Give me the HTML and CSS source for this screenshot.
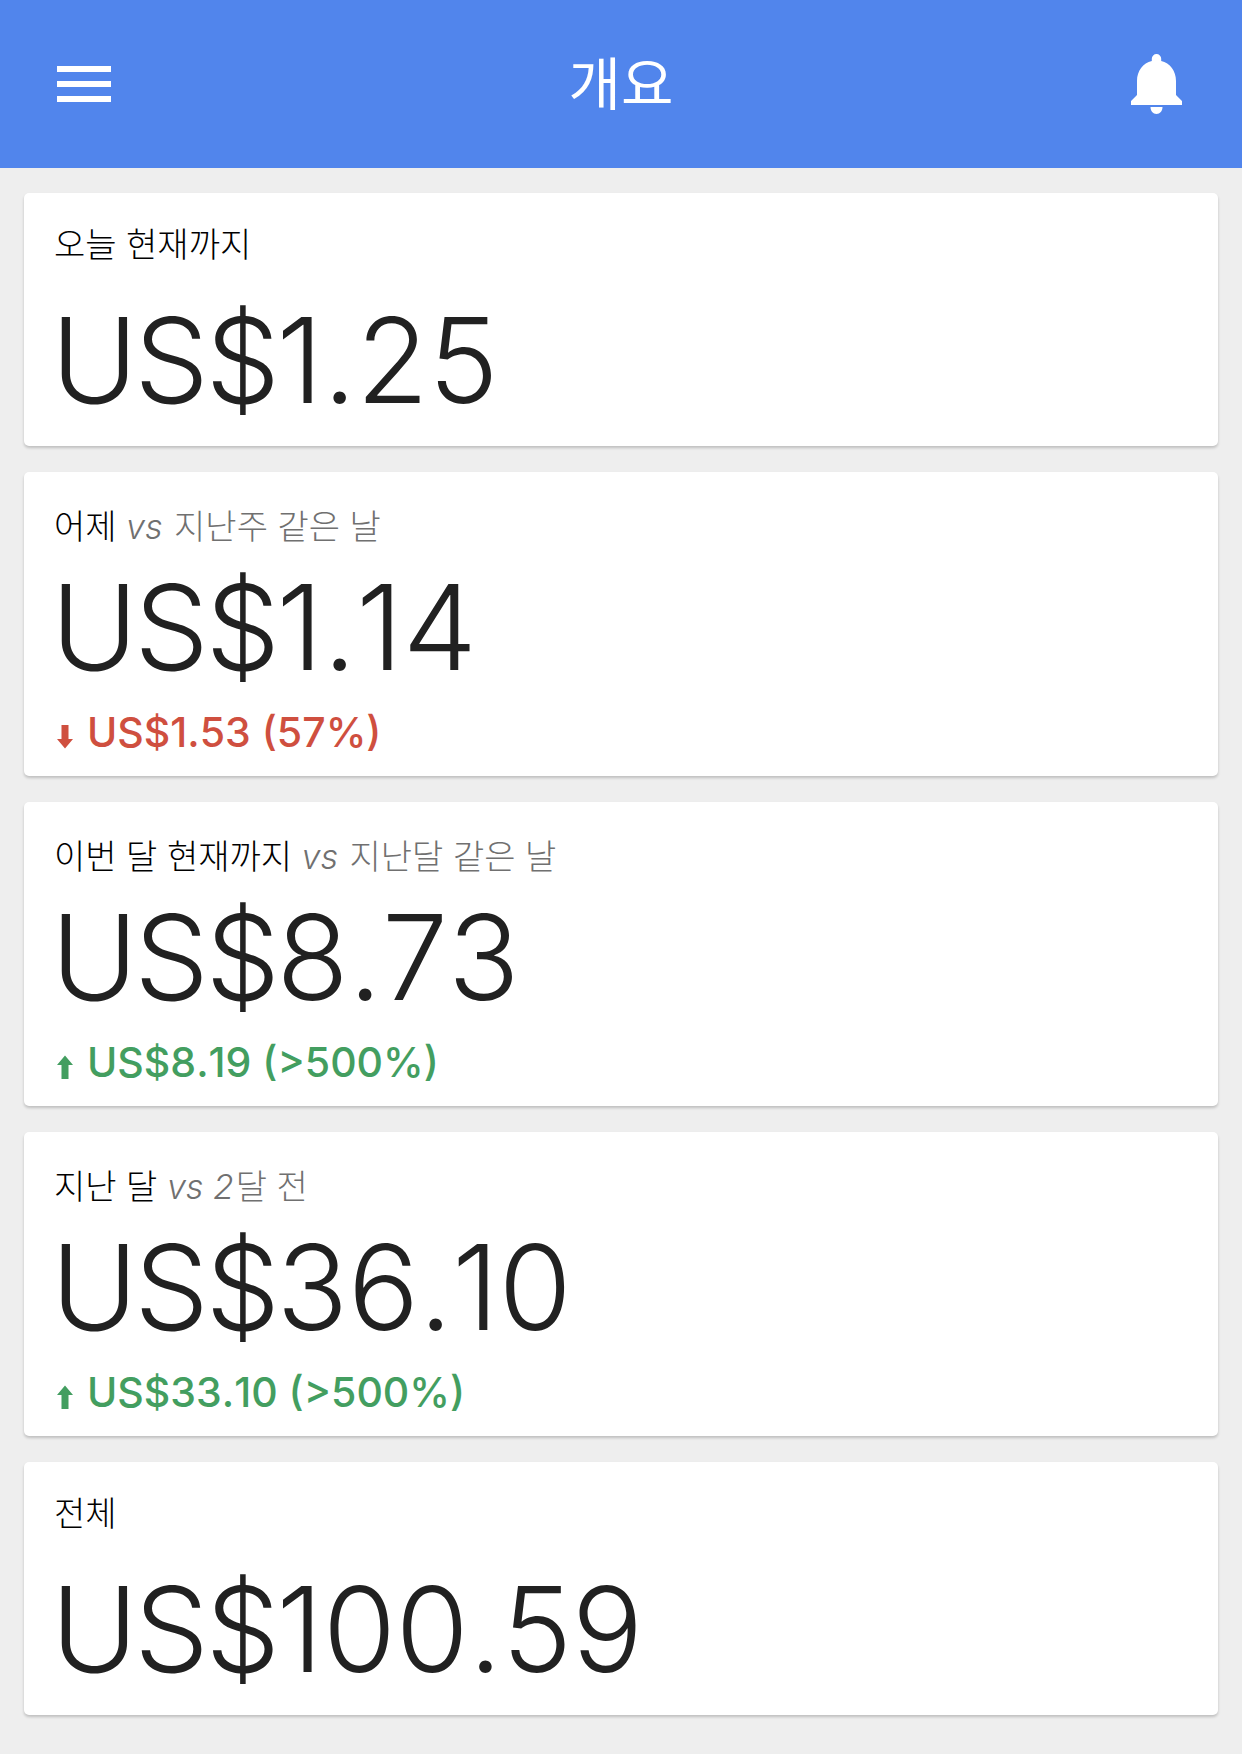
FILE: index.html
```html
<!DOCTYPE html>
<html lang="ko">
<head>
	<meta charset="UTF-8">
	<meta name="viewport" content="width=device-width, initial-scale=1.0">
	<title>개요</title>
	<link rel="stylesheet" href="styles.css">
</head>
<body>
<header class="top-bar">
	<svg class="menu-icon" width="54" height="36" viewBox="0 0 54 36">
		<path d="M0 0h54v6H0zM0 15h54v6H0zM0 30h54v6H0z" fill="#fff"/>
	</svg>
	<h1 class="top-title">개요</h1>
	<svg class="bell-icon" width="51" height="60" viewBox="0 0 51 60">
		<path d="M25.500 0a4.700 4.700 0 0 1 4.700 4.700V7C39 9 45 17 45 27v14l6 6v4H0v-4l6-6V27C6 17 12 9 20.800 7V4.700A4.700 4.700 0 0 1 25.500 0zM19.500 53h12c0 4-2.500 7-6 7s-6-3-6-7z" fill="#fff"/>
	</svg>
</header>

<main class="card-list">
	<section class="card card-plain">
		<p class="card-label">오늘 현재까지</p>
		<p class="card-amount"><span class="currency">US$</span>1.25</p>
	</section>

	<section class="card">
		<p class="card-label">어제 <span class="compare"><i>vs</i> 지난주 같은 날</span></p>
		<p class="card-amount"><span class="currency">US$</span>1.14</p>
		<p class="card-change down">
			<svg class="arrow" width="16" height="24" viewBox="0 0 16 24"><path d="M4.500 0h7v14H16l-8 9.500L0 14h4.500z" fill="currentColor"/></svg>
			US$1.53 (57%)
		</p>
	</section>

	<section class="card">
		<p class="card-label">이번 달 현재까지 <span class="compare"><i>vs</i> 지난달 같은 날</span></p>
		<p class="card-amount"><span class="currency">US$</span>8.73</p>
		<p class="card-change up">
			<svg class="arrow" width="16" height="24" viewBox="0 0 16 24"><path d="M8 .5l8 9.500h-4.500v14h-7V10H0z" fill="currentColor"/></svg>
			US$8.19 (&gt;500%)
		</p>
	</section>

	<section class="card">
		<p class="card-label">지난 달 <span class="compare"><i>vs 2</i>달 전</span></p>
		<p class="card-amount"><span class="currency">US$</span>36.10</p>
		<p class="card-change up">
			<svg class="arrow" width="16" height="24" viewBox="0 0 16 24"><path d="M8 .5l8 9.500h-4.500v14h-7V10H0z" fill="currentColor"/></svg>
			US$33.10 (&gt;500%)
		</p>
	</section>

	<section class="card card-plain">
		<p class="card-label">전체</p>
		<p class="card-amount"><span class="currency">US$</span>100.59</p>
	</section>
</main>
</body>
</html>
```
FILE: styles.css
```css
body {
	margin: 0;
	background-color: #eeeeee;
	font-family: Inter, "Noto Sans CJK KR", sans-serif;
	color: #212121;
}
.top-bar {
	height: 168px;
	background-color: #5185ec;
	display: flex;
	align-items: center;
	justify-content: space-between;
	padding: 0 60px 0 57px;
}
.top-title {
	margin: 0 0 8px;
	font-size: 57px;
	font-weight: 400;
	color: #fff;
	font-family: "Noto Sans CJK KR", sans-serif;
}
.card-list {
	display: flex;
	flex-direction: column;
	gap: 26px;
	padding: 25px 24px 38px;
}
.card {
	height: 304px;
	box-sizing: border-box;
	padding: 31px 30px 0;
	background-color: #fff;
	border-radius: 5px;
	box-shadow: 0 2px 3px rgba(0, 0, 0, 0.2);
}
.card p {
	margin: 0;
}
.card-label {
	font-size: 34px;
	line-height: 44px;
	font-weight: 300;
	color: #000;
	font-family: "Noto Sans CJK KR", sans-serif;
}
.compare {
	color: #707070;
}
.compare i {
	margin-right: 2px;
	font-family: Inter, sans-serif;
}
.card .card-amount {
	margin: 8px 0 0 -3px;
	font-size: 118px;
	line-height: 140px;
	font-weight: 300;
	font-kerning: none;
}
.currency {
	letter-spacing: -3.5px;
}
.card-plain {
	height: 253px;
	padding-top: 28px;
}
.card-plain .card-amount {
	margin-top: 25px;
}
.card .card-change {
	display: flex;
	align-items: center;
	gap: 14px;
	margin-top: 7px;
	font-size: 41px;
	line-height: 56px;
	font-weight: 500;
	font-kerning: none;
}
.arrow {
	margin: 10px 0 0 3px;
}
.down {
	color: #cf4f3f;
}
.up {
	color: #439e60;
}
```
